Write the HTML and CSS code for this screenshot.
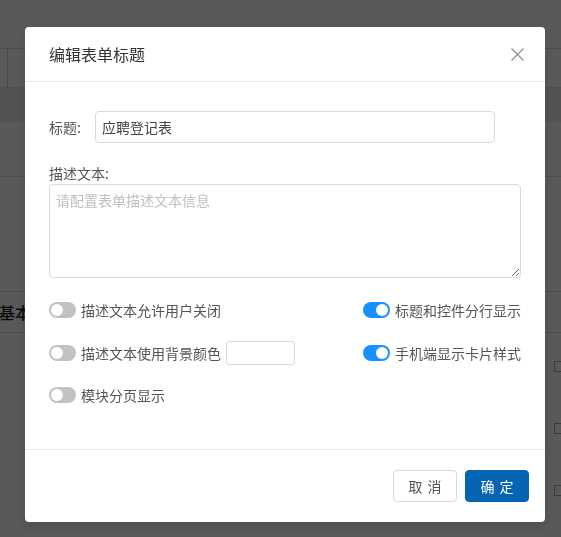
FILE: index.html
```html
<!DOCTYPE html>
<html lang="zh-CN">
<head>
<meta charset="utf-8">
<title>编辑表单标题</title>
<link rel="stylesheet" href="styles.css">
</head>
<body>
<div class="page">
  <div class="page-top"></div>
  <div class="page-thead"><div class="cell-first"></div><div class="cell-rest"></div></div>
  <div class="page-band"></div>
  <div class="page-row h55"></div>
  <div class="page-row h115"></div>
  <div class="page-section">基本信息</div>
  <div class="page-item"><span class="edit-ico"></span></div>
  <div class="page-item"><span class="edit-ico"></span></div>
  <div class="page-item"><span class="edit-ico"></span></div>
</div>
<div class="mask"></div>
<div class="modal-wrap">
  <div class="modal">
    <div class="modal-header">
      <span class="modal-title">编辑表单标题</span>
      <button class="modal-close" aria-label="关闭">
        <svg width="13" height="13" viewBox="0 0 13 13"><path d="M0.5 0.5 L12.5 12.5 M12.5 0.5 L0.5 12.5" stroke="#8c8c8c" stroke-width="1.2" fill="none"/></svg>
      </button>
    </div>
    <div class="modal-body">
      <div class="field-row">
        <label class="field-label">标题:</label>
        <input class="text-input" type="text" value="应聘登记表">
      </div>
      <div class="desc-label">描述文本:</div>
      <textarea class="desc-area" placeholder="请配置表单描述文本信息"></textarea>
      <div class="switch-grid">
        <div class="switch-item"><span class="switch"></span><span class="switch-text">描述文本允许用户关闭</span></div>
        <div class="switch-item"><span class="switch on"></span><span class="switch-text">标题和控件分行显示</span></div>
        <div class="switch-item"><span class="switch"></span><span class="switch-text">描述文本使用背景颜色</span><span class="color-box"></span></div>
        <div class="switch-item"><span class="switch on"></span><span class="switch-text">手机端显示卡片样式</span></div>
        <div class="switch-item"><span class="switch"></span><span class="switch-text">模块分页显示</span></div>
        <div class="switch-item"></div>
      </div>
    </div>
    <div class="modal-footer">
      <button class="btn btn-default">取消</button>
      <button class="btn btn-primary">确定</button>
    </div>
  </div>
</div>
</body>
</html>
```

FILE: styles.css
```css
* { box-sizing: border-box; }
html, body {
  margin: 0;
  padding: 0;
  width: 561px;
  height: 537px;
  overflow: hidden;
  background: #fff;
  font-family: "Noto Sans CJK SC", "Microsoft YaHei", "Noto Sans", sans-serif;
}

/* underlying page */
.page { width: 561px; }
.page-top { height: 48px; }
.page-thead {
  height: 40px;
  display: flex;
  border-top: 1px solid #d6d6d6;
  border-bottom: 1px solid #e6e6e6;
}
.cell-first { width: 8px; border-right: 1px solid #d6d6d6; }
.cell-rest { flex: 1; }
.page-band { height: 34px; background: #ececec; }
.page-row { border-bottom: 1px solid #dcdcdc; }
.h55 { height: 55px; }
.h115 { height: 115px; }
.page-section {
  height: 41px;
  line-height: 40px;
  font-size: 16px;
  font-weight: 500;
  color: #1a1a1a;
  margin-left: -1px;
  border-bottom: 1px solid #dcdcdc;
}
.page-item {
  height: 62px;
  display: flex;
  align-items: center;
  justify-content: flex-end;
}
.edit-ico {
  width: 11px;
  height: 11px;
  border: 1px solid #aaa;
  margin-right: -4px;
  margin-top: 4px;
}

.mask {
  position: fixed;
  inset: 0;
  background: rgba(0, 0, 0, 0.65);
}

.modal-wrap {
  position: fixed;
  inset: 0;
  padding: 27px 0 0 25px;
}
.modal {
  width: 520px;
  background: #fff;
  border-radius: 4px;
  box-shadow: 0 4px 12px rgba(0,0,0,0.15);
  overflow: hidden;
}
.modal-header {
  height: 55px;
  padding: 0 24px;
  display: flex;
  align-items: center;
  justify-content: space-between;
  border-bottom: 1px solid #e8e8e8;
}
.modal-title {
  font-size: 16px;
  line-height: 22px;
  color: #333;
}
.modal-close {
  border: 0;
  background: transparent;
  padding: 0;
  margin-right: -3px;
  width: 13px;
  height: 13px;
  display: flex;
}

.modal-body {
  padding: 29px 24px 41px;
  height: 367px;
}
.field-row {
  display: flex;
  align-items: center;
  height: 32px;
}
.field-label {
  width: 46px;
  font-size: 14px;
  color: #555;
  line-height: 20px;
}
.text-input {
  width: 400px;
  height: 32px;
  border: 1px solid #d9d9d9;
  border-radius: 4px;
  padding: 0 6px;
  font-family: inherit;
  font-size: 14px;
  color: #444;
  outline: none;
}
.desc-label {
  margin-top: 20px;
  font-size: 14px;
  line-height: 20px;
  color: #555;
}
.desc-area {
  display: block;
  margin-top: 1px;
  width: 472px;
  height: 94px;
  border: 1px solid #d9d9d9;
  border-radius: 4px;
  padding: 5px 6px;
  font-family: inherit;
  font-size: 14px;
  line-height: 20px;
  resize: vertical;
  outline: none;
}
.desc-area::placeholder { color: #bfbfbf; }

.switch-grid {
  margin-top: 20px;
  display: grid;
  grid-template-columns: 2fr 1fr;
  grid-auto-rows: 24px;
  row-gap: 18.5px;
}
.switch-item {
  display: flex;
  align-items: center;
  white-space: nowrap;
}
.switch {
  position: relative;
  width: 27px;
  height: 16px;
  border-radius: 8px;
  background: #c2c2c2;
  flex: none;
}
.switch::after {
  content: "";
  position: absolute;
  top: 2px;
  left: 2px;
  width: 12px;
  height: 12px;
  border-radius: 50%;
  background: #fff;
}
.switch.on { background: #1890ff; }
.switch.on::after { left: 13px; }
.switch-text {
  margin-left: 5px;
  font-size: 14px;
  line-height: 20px;
  color: #555;
}
.color-box {
  margin-left: 5px;
  width: 69px;
  height: 24px;
  border: 1px solid #d9d9d9;
  border-radius: 3px;
  flex: none;
}

.modal-footer {
  border-top: 1px solid #e8e8e8;
  padding: 20px 16px 20px;
  display: flex;
  justify-content: flex-end;
  gap: 8px;
}
.btn {
  width: 64px;
  height: 32px;
  border-radius: 4px;
  font-family: inherit;
  font-size: 14px;
  letter-spacing: 5px;
  padding: 0 0 0 5px;
  cursor: pointer;
}
.btn-default {
  background: #fff;
  border: 1px solid #d9d9d9;
  color: #555;
}
.btn-primary {
  background: #0565b2;
  border: 1px solid #0565b2;
  color: #fff;
}
```
